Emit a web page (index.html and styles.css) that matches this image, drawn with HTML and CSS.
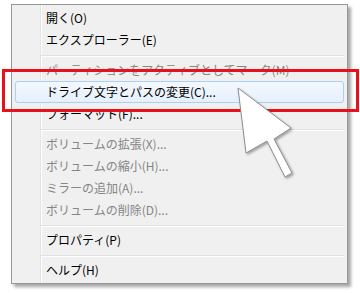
FILE: index.html
```html
<!DOCTYPE html>
<html lang="ja">
<head>
  <meta charset="UTF-8">
  <title>ドライブ文字とパスの変更</title>
  <link rel="stylesheet" href="styles.css">
</head>
<body>
  <div class="menu">
    <div class="item">開く(O)</div>
    <div class="item">エクスプローラー(E)</div>
    <div class="sep"></div>
    <div class="item disabled">パーティションをアクティブとしてマーク(M)</div>
    <div class="item active">ドライブ文字とパスの変更(C)...</div>
    <div class="item">フォーマット(F)...</div>
    <div class="sep"></div>
    <div class="item disabled">ボリュームの拡張(X)...</div>
    <div class="item disabled">ボリュームの縮小(H)...</div>
    <div class="item disabled">ミラーの追加(A)...</div>
    <div class="item disabled">ボリュームの削除(D)...</div>
    <div class="sep"></div>
    <div class="item">プロパティ(P)</div>
    <div class="sep"></div>
    <div class="item">ヘルプ(H)</div>
  </div>

  <!-- annotation: red frame + pointer -->
  <div class="mark"></div>
  <svg class="cursor" width="360" height="293" viewBox="0 0 360 293">
    <defs>
      <filter id="sh" x="-20%" y="-20%" width="140%" height="140%">
        <feDropShadow dx="1.5" dy="1.5" stdDeviation="1.2" flood-color="#000" flood-opacity="0.35"/>
      </filter>
    </defs>
    <polygon points="238,88 246,153 267,141 285,177 292,173 274,139 291,128"
      fill="#fff" stroke="#8c8c8c" stroke-width="1" stroke-linejoin="round" filter="url(#sh)"/>
  </svg>
</body>
</html>
```

FILE: styles.css
```css
body {
  margin: 0;
  width: 360px;
  height: 293px;
  overflow: hidden;
  background: #fff;
  font-family: "Noto Sans CJK JP", "Noto Sans", sans-serif;
  font-size: 12px;
  position: relative;
}
.menu {
  margin: 4px 0 0 11px;
  width: 337px;
  box-sizing: border-box;
  border: 1px solid #979797;
  padding: 2px 3px;
  background-color: #f0f0f0;
  background-image: linear-gradient(to right, transparent 28px, #e2e3e3 28px, #e2e3e3 29px, #fff 29px, #fff 30px, transparent 30px);
  box-shadow: 3px 3px 3px rgba(0, 0, 0, 0.35);
}
.item {
  height: 22px;
  line-height: 22px;
  padding-left: 31px;
  color: #000;
  white-space: nowrap;
  box-sizing: border-box;
}
.item.disabled { color: #858585; }
.item.active {
  border: 1px solid #a9d0f5;
  border-radius: 3px;
  background: linear-gradient(#f3f8fe, #e6f0fc);
  line-height: 20px;
  padding-left: 30px;
}
.sep {
  height: 8px;
  margin-left: 26px;
  background: linear-gradient(transparent 4px, #e0e0e0 4px, #e0e0e0 5px, #fff 5px, #fff 6px, transparent 6px);
}
.mark {
  position: absolute;
  left: 2px;
  top: 69px;
  width: 357px;
  height: 43px;
  box-sizing: border-box;
  border: 3px solid #e8101a;
}
.cursor {
  position: absolute;
  left: 0;
  top: 0;
}
```
